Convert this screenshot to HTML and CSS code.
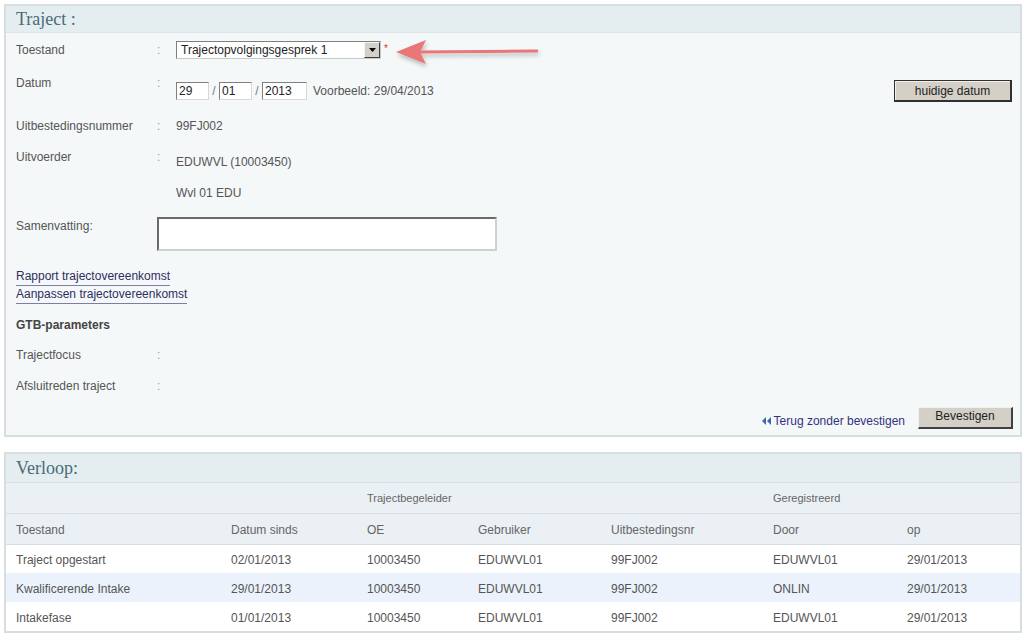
FILE: index.html
```html
<!DOCTYPE html>
<html>
<head>
<meta charset="utf-8">
<link rel="stylesheet" href="styles.css">
</head>
<body>
<div class="page">
  <section class="panel traject">
    <h2 class="panel-title">Traject :</h2>
    <div class="panel-body">
      <div class="row r-toestand">
        <div class="label">Toestand</div>
        <div class="colon">:</div>
        <div class="value">
          <div class="select">
            <span class="select-text">Trajectopvolgingsgesprek 1</span>
            <span class="select-btn"><svg width="7" height="4" viewBox="0 0 7 4"><path d="M0 0h7L3.5 4z" fill="#000"/></svg></span>
          </div>
          <span class="req">*</span>
        </div>
        <svg class="annot-arrow" width="160" height="40" viewBox="0 0 160 40">
          <defs>
            <filter id="sh" x="-20%" y="-50%" width="140%" height="200%">
              <feGaussianBlur in="SourceAlpha" stdDeviation="2"/>
              <feOffset dx="1" dy="3"/>
              <feComponentTransfer><feFuncA type="linear" slope="0.25"/></feComponentTransfer>
              <feMerge><feMergeNode/><feMergeNode in="SourceGraphic"/></feMerge>
            </filter>
          </defs>
          <g filter="url(#sh)">
            <path d="M26 16.5 L146 15.5 L146 18.5 L26 19.5 Z" fill="#e97777"/>
            <path d="M4 18 L34 6 L28 18 L34 30 Z" fill="#e97777"/>
          </g>
        </svg>
      </div>

      <div class="row r-datum">
        <div class="label">Datum</div>
        <div class="colon">:</div>
        <div class="value date-value">
          <span class="inp w-dd">29</span><span class="slash">/</span><span class="inp w-dd">01</span><span class="slash">/</span><span class="inp w-yy">2013</span>
          <span class="hint">Voorbeeld: 29/04/2013</span>
        </div>
        <button class="btn btn-today">huidige datum</button>
      </div>

      <div class="row r-nummer">
        <div class="label">Uitbestedingsnummer</div>
        <div class="colon">:</div>
        <div class="value">99FJ002</div>
      </div>

      <div class="row r-uitvoerder">
        <div class="label">Uitvoerder</div>
        <div class="colon">:</div>
        <div class="value stack">
          <div>EDUWVL (10003450)</div>
          <div class="second">Wvl 01 EDU</div>
        </div>
      </div>

      <div class="row r-samen">
        <div class="label">Samenvatting:</div>
        <div class="textarea"></div>
      </div>

      <div class="links">
        <a class="link" href="#">Rapport trajectovereenkomst</a>
        <a class="link" href="#">Aanpassen trajectovereenkomst</a>
      </div>

      <div class="subhead">GTB-parameters</div>

      <div class="row r-focus">
        <div class="label">Trajectfocus</div>
        <div class="colon">:</div>
        <div class="value"></div>
      </div>

      <div class="row r-afsluit">
        <div class="label">Afsluitreden traject</div>
        <div class="colon">:</div>
        <div class="value"></div>
      </div>

      <div class="actions">
        <a class="back" href="#"><svg width="9" height="8" viewBox="0 0 9 8"><path d="M4 0v8L0 4z M9 0v8L5 4z" fill="#3b67ad"/></svg>Terug zonder bevestigen</a>
        <button class="btn btn-confirm">Bevestigen</button>
      </div>
    </div>
  </section>

  <section class="panel verloop">
    <h2 class="panel-title">Verloop:</h2>
    <table class="grid">
      <colgroup>
        <col class="c1"><col class="c2"><col class="c3"><col class="c4"><col class="c5"><col class="c6"><col class="c7">
      </colgroup>
      <thead>
        <tr class="h1">
          <th></th><th></th><th>Trajectbegeleider</th><th></th><th></th><th>Geregistreerd</th><th></th>
        </tr>
        <tr class="h2">
          <th>Toestand</th><th>Datum sinds</th><th>OE</th><th>Gebruiker</th><th>Uitbestedingsnr</th><th>Door</th><th>op</th>
        </tr>
      </thead>
      <tbody>
        <tr><td>Traject opgestart</td><td>02/01/2013</td><td>10003450</td><td>EDUWVL01</td><td>99FJ002</td><td>EDUWVL01</td><td>29/01/2013</td></tr>
        <tr class="alt"><td>Kwalificerende Intake</td><td>29/01/2013</td><td>10003450</td><td>EDUWVL01</td><td>99FJ002</td><td>ONLIN</td><td>29/01/2013</td></tr>
        <tr><td>Intakefase</td><td>01/01/2013</td><td>10003450</td><td>EDUWVL01</td><td>99FJ002</td><td>EDUWVL01</td><td>29/01/2013</td></tr>
      </tbody>
    </table>
  </section>
</div>
</body>
</html>
```

FILE: styles.css
```css
* { box-sizing: border-box; }
html, body { margin: 0; padding: 0; background: #fff; }
body {
  font-family: "Liberation Sans", Arial, sans-serif;
  font-size: 12px;
  color: #555;
  width: 1024px;
  height: 640px;
  overflow: hidden;
}
.page {
  padding: 4px 2px 0 4px;
}
.panel {
  border: 2px solid #d6dee1;
  background: #f4f8f9;
}
.panel-title {
  margin: 0;
  height: 27px;
  line-height: 27px;
  padding-left: 10px;
  background: #e4edf0;
  border-bottom: 1px solid #dbe4e7;
  font-family: "Liberation Serif", "Times New Roman", serif;
  font-weight: normal;
  font-size: 18px;
  color: #4a6b78;
}
.panel-body {
  padding: 8px 7px 6px 10px;
}
.row {
  display: flex;
  align-items: flex-start;
  line-height: 16px;
  position: relative;
}
.label { width: 141px; flex: none; }
.colon { width: 19px; flex: none; color: #999; }
.value { display: flex; align-items: center; }

.r-toestand { height: 18px; }
.r-toestand .label, .r-toestand .colon { padding-top: 1px; }
.select {
  width: 205px;
  height: 18px;
  background: #fff;
  border: 1px solid #7f7f7f;
  border-right-color: #c8c8c8;
  border-bottom-color: #c8c8c8;
  display: flex;
  align-items: center;
  justify-content: space-between;
  color: #222;
  font-size: 12px;
}
.select-text { padding-left: 4px; line-height: 16px; }
.select-btn {
  width: 16px;
  height: 16px;
  background: #d4d0c8;
  border: 1px solid;
  border-color: #f4f4f4 #404040 #404040 #f4f4f4;
  display: flex;
  align-items: center;
  justify-content: center;
}
.req { color: #d33; font-size: 10px; margin-left: 3px; align-self: flex-start; }
.annot-arrow {
  position: absolute;
  left: 376px;
  top: -7px;
}

.r-datum { margin-top: 16px; height: 26px; }
.date-value { padding-top: 7px; }
.inp {
  display: inline-block;
  height: 18px;
  background: #fff;
  border: 1px solid;
  border-color: #808080 #d8d8d8 #d8d8d8 #808080;
  color: #222;
  line-height: 16px;
  padding-left: 2px;
}
.w-dd { width: 33px; }
.w-yy { width: 45px; }
.slash { width: 10px; text-align: center; color: #777; }
.hint { margin-left: 6px; }
.btn {
  font-family: "Liberation Sans", Arial, sans-serif;
  font-size: 12px;
  color: #222;
  background: #d4d0c8;
  padding: 0;
  cursor: default;
}
.btn-today {
  margin-left: auto;
  margin-top: 5px;
  margin-right: 1px;
  width: 118px;
  height: 22px;
  border: 1px solid #303030;
  border-right-width: 2px;
  border-bottom-width: 2px;
  box-shadow: inset 1px 1px 0 #f2f0ec;
}

.r-nummer { margin-top: 17px; }
.r-uitvoerder { margin-top: 15px; }
.stack { display: block; padding-top: 5px; }
.stack .second { margin-top: 15px; }
.r-samen { margin-top: 16px; }
.r-samen .label { width: 141px; padding-top: 1px; }
.textarea {
  width: 340px;
  height: 34px;
  background: #fff;
  border: 2px solid;
  border-color: #6a6a6a #d0d0d0 #d0d0d0 #6a6a6a;
}

.links { margin-top: 17px; display: flex; flex-direction: column; align-items: flex-start; }
.link {
  color: #2e2e5e;
  text-decoration: none;
  border-bottom: 1px solid #7d7da8;
  line-height: 17px;
  height: 18px;
}
.subhead { margin-top: 13px; font-weight: bold; color: #444; line-height: 16px; }
.r-focus { margin-top: 14px; }
.r-afsluit { margin-top: 15px; }

.actions {
  margin-top: 13px;
  display: flex;
  justify-content: flex-end;
  align-items: center;
  height: 22px;
}
.back {
  color: #33337a;
  text-decoration: none;
  display: flex;
  align-items: center;
  gap: 3px;
  margin-right: 13px;
  padding-top: 6px;
}
.btn-confirm {
  width: 95px;
  height: 22px;
  border: 1px solid;
  border-color: #f4f2ee #404040 #404040 #f4f2ee;
  border-right-width: 2px;
  border-bottom-width: 2px;
  margin-right: 0;
  line-height: 16px;
  padding-bottom: 3px;
}

.verloop { margin-top: 15px; background: #fff; }
.verloop .panel-title { height: 29px; line-height: 29px; border-bottom: 1px solid #d8e0e5; }
.grid {
  width: 100%;
  border-collapse: collapse;
  table-layout: fixed;
}
.c1 { width: 215px; }
.c2 { width: 136px; }
.c3 { width: 111px; }
.c4 { width: 133px; }
.c5 { width: 162px; }
.c6 { width: 134px; }
.grid th {
  font-weight: normal;
  text-align: left;
  color: #666;
  background: #eaf0f4;
  padding: 0 0 0 10px;
  border-bottom: 1px solid #d6dee4;
}
.grid .h1 th { font-size: 11px; height: 30px; padding-top: 1px; }
.grid .h2 th { height: 31px; padding-top: 2px; }
.grid td {
  height: 29px;
  padding: 3px 0 0 10px;
  color: #555;
  white-space: nowrap;
}
.grid tr.alt td { background: #ebf2fb; }
```
